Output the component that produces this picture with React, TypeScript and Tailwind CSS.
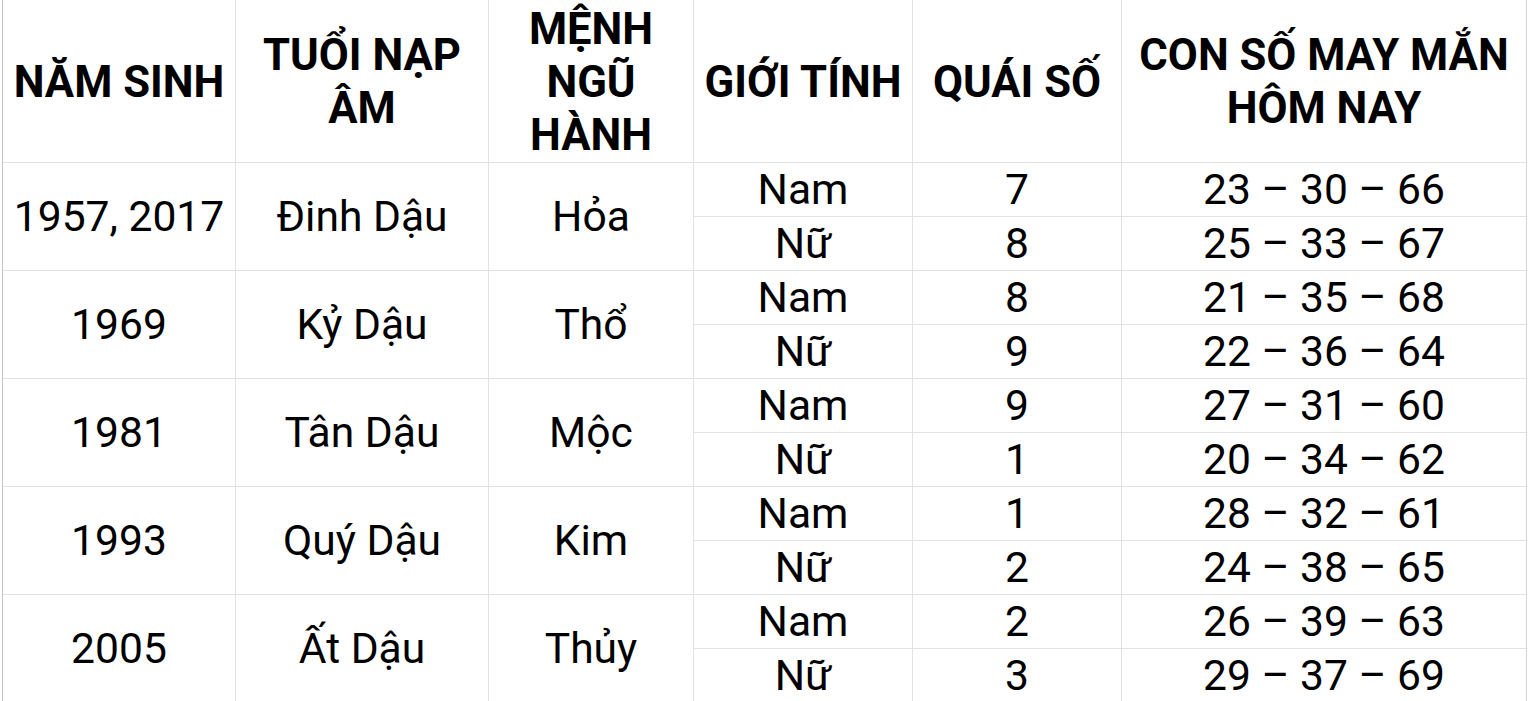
import React from "react";

const groups = [
  { year: "1957, 2017", tuoi: "Đinh Dậu", menh: "Hỏa", rows: [["Nam", "7", "23 – 30 – 66"], ["Nữ", "8", "25 – 33 – 67"]] },
  { year: "1969", tuoi: "Kỷ Dậu", menh: "Thổ", rows: [["Nam", "8", "21 – 35 – 68"], ["Nữ", "9", "22 – 36 – 64"]] },
  { year: "1981", tuoi: "Tân Dậu", menh: "Mộc", rows: [["Nam", "9", "27 – 31 – 60"], ["Nữ", "1", "20 – 34 – 62"]] },
  { year: "1993", tuoi: "Quý Dậu", menh: "Kim", rows: [["Nam", "1", "28 – 32 – 61"], ["Nữ", "2", "24 – 38 – 65"]] },
  { year: "2005", tuoi: "Ất Dậu", menh: "Thủy", rows: [["Nam", "2", "26 – 39 – 63"], ["Nữ", "3", "29 – 37 – 69"]] },
];

const headers = ["NĂM SINH", "TUỔI NẠP ÂM", "MỆNH NGŨ HÀNH", "GIỚI TÍNH", "QUÁI SỐ", "CON SỐ MAY MẮN HÔM NAY"];

function Merged({ children }: { children: React.ReactNode }) {
  return (
    <div className="row-span-2 flex items-center justify-center bg-white text-[42.6px] leading-[53px]">
      {children}
    </div>
  );
}

function Cell({ children }: { children: React.ReactNode }) {
  return (
    <div className="flex items-center justify-center bg-white text-[42.6px] leading-[53px]">
      {children}
    </div>
  );
}

export default function App() {
  return (
    <div className="h-[701px] w-[1528px] overflow-hidden bg-white pl-[2px] font-['Roboto','Noto_Sans',sans-serif] text-black">
      <div className="grid w-[1525px] grid-cols-[232px_252px_204px_218px_208px_404px] grid-rows-[162px_repeat(10,53px)] gap-px border-l border-r border-l-[#c4c4c4] border-r-[#d6d6d6] bg-[#e2e2e2]">
        {headers.map((h, i) => (
          <div key={i} className="flex items-center justify-center bg-white px-1 pt-[2px] text-center text-[43.6px] font-bold leading-[53px]">
            {h}
          </div>
        ))}
        {groups.map((g, gi) => (
          <React.Fragment key={gi}>
            <Merged>{g.year}</Merged>
            <Merged>{g.tuoi}</Merged>
            <Merged>{g.menh}</Merged>
            {g.rows.map((r) => r.map((c, ci) => <Cell key={r[0] + ci}>{c}</Cell>))}
          </React.Fragment>
        ))}
      </div>
    </div>
  );
}
